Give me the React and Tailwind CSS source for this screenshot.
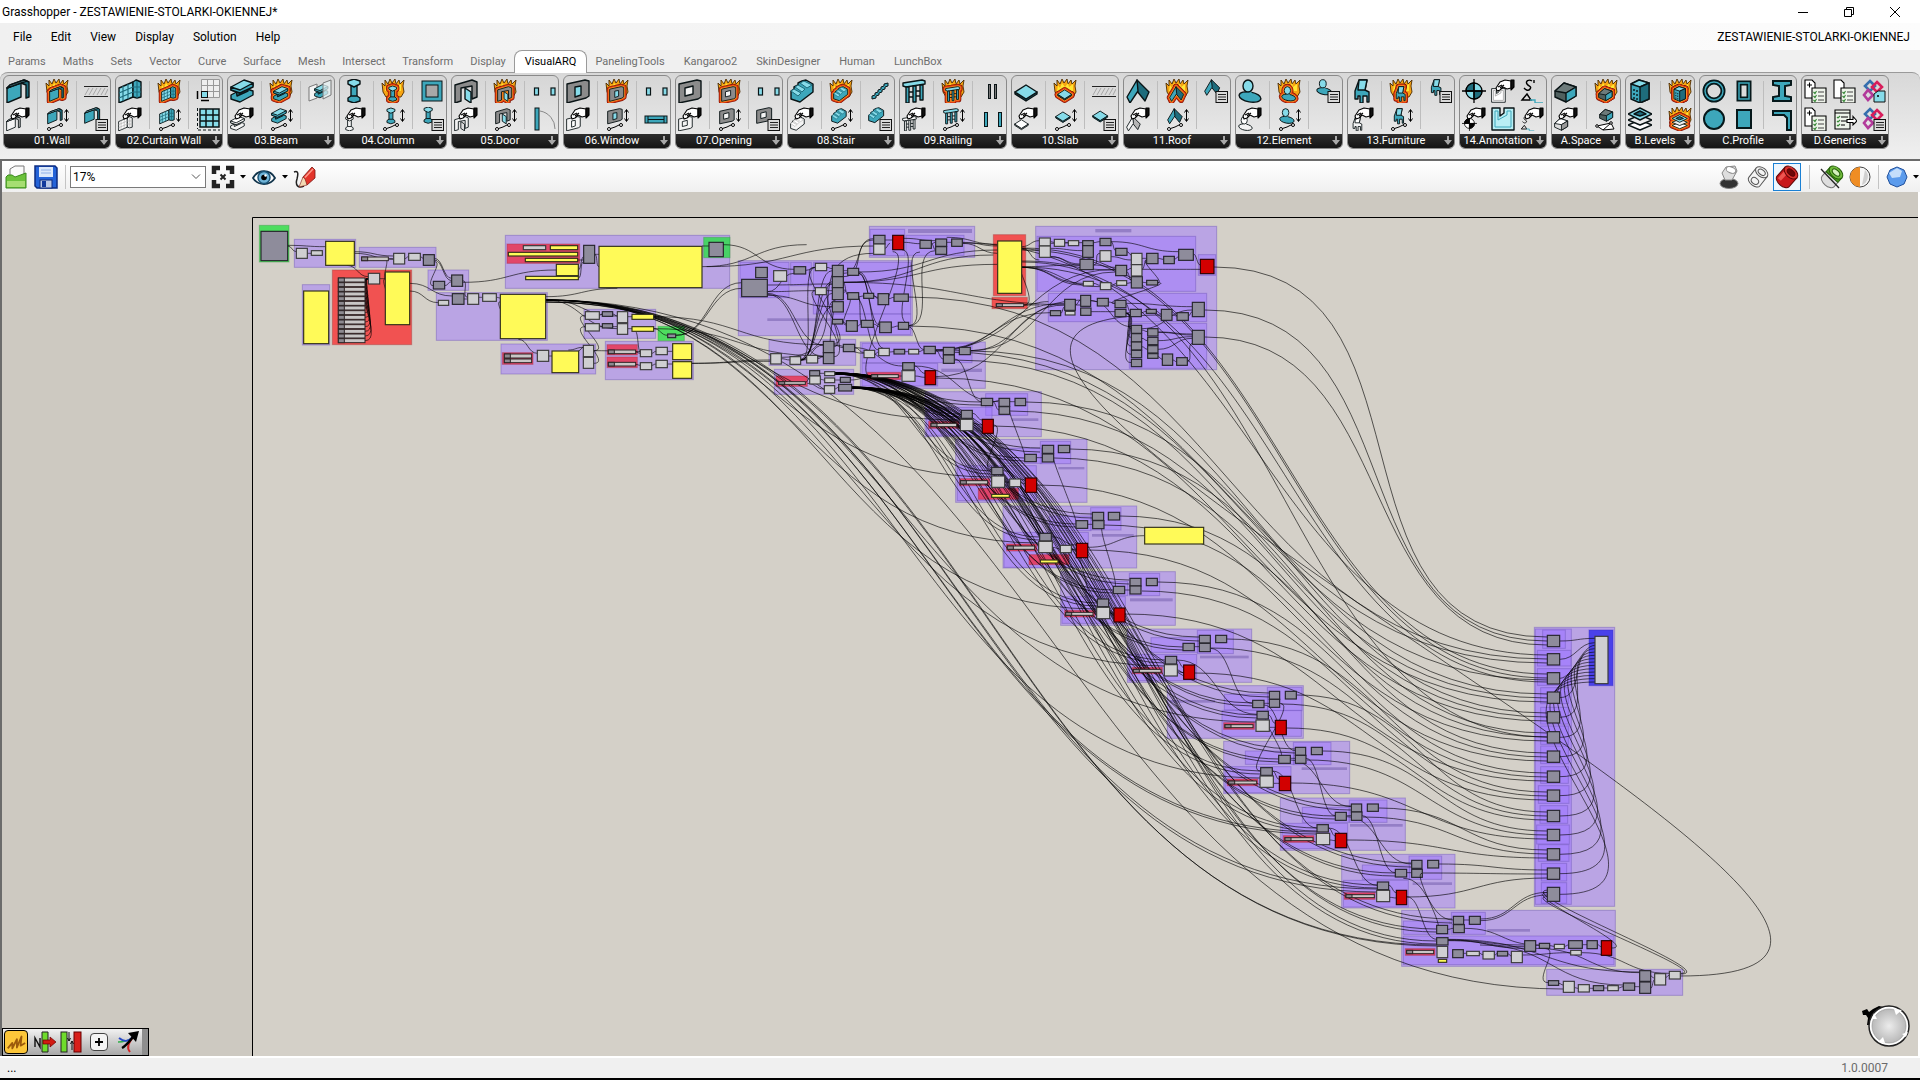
import React from "react";

const T = "#3da7bb";
const L = "#86dbe9";
const D = "#1e6c7c";
const G = "#8b8b8b";

/* ---------- ribbon glyphs ---------- */

function Shape({ kind, white, halo, haloWidth }) {
  const t = white ? "#f4f4f4" : T;
  const l = white ? "#ffffff" : L;
  const d = white ? "#b5b5b5" : D;
  const g = white ? "#f4f4f4" : G;
  const s = { stroke: halo ?? "#0a1416", strokeWidth: haloWidth ?? 1.4, strokeLinejoin: "round" };
  switch (kind) {
    case "wall":
      return (
        <g {...s}>
          <path d="M1 9 15 3V18L1 24Z" fill={t} />
          <path d="M1 9 4 6 18 1 23 3V18L20 19V6L15 4Z" fill={d} />
          <path d="M1 9 4 6 18 1 21 2 15 4Z" fill={l} />
        </g>
      );
    case "curtain":
      return (
        <g {...s}>
          <path d="M1 9 15 3V18L1 24Z" fill={l} />
          <path d="M15 3 18 1 23 3V18L19 19 15 18Z" fill={t} />
          <path d="M5 7V22M10 5V20M1 14 15 8M1 19 15 13M19 2V19M15 8 23 8M15 13 23 13" fill="none" stroke={d} strokeWidth="1.2" />
        </g>
      );
    case "beam":
      return (
        <g {...s}>
          <path d="M1 16 14 9 23 12V16L10 23 1 20Z" fill={t} />
          <path d="M6 10 18 7V12L7 17Z" fill={d} />
          <path d="M1 8 14 1 23 4V7L10 14 1 11Z" fill={l} />
          <path d="M1 8 10 11 23 4V8L10 14 1 11Z" fill={t} />
        </g>
      );
    case "column":
      return (
        <g {...s}>
          <path d="M9 5H15V19H9Z" fill={t} />
          <path d="M6 2 12 0 18 2V5L12 8 6 5Z" fill={l} />
          <path d="M6 19 9 17H15L18 19V22L12 24 6 22Z" fill={t} />
        </g>
      );
    case "door":
      return (
        <g {...s}>
          <path d="M1 6 18 1 23 3V18L18 20V7L7 9V22L1 24Z" fill={g} />
          <path d="M11 9 17 13V24L11 20Z" fill={white ? "#ddd" : L} />
        </g>
      );
    case "window":
      return (
        <g {...s}>
          <path d="M1 5 19 1 23 2V17L20 19 1 24Z" fill={g} />
          <path d="M9 8 15 7V16L9 18Z" fill={white ? "#fff" : L} />
        </g>
      );
    case "opening":
      return (
        <g {...s}>
          <path d="M1 5 19 1 23 2V18L20 20 1 24Z" fill={g} />
          <path d="M7 9 15 7V15L7 17Z" fill="#f4f4f4" />
        </g>
      );
    case "stair":
      return (
        <g {...s}>
          <path d="M1 12 4 10V8L8 6V4L12 2 16 1 23 5V13L10 23 1 20Z" fill={t} />
          <path d="M1 12 4 10 11 14 8 17ZM5 8 8 6 15 10 12 13ZM10 4 14 2 22 6 17 9Z" fill={l} stroke={d} strokeWidth="1" />
        </g>
      );
    case "railing":
      return (
        <g {...s}>
          <path d="M1 4 20 1 23 2V5L4 8 1 7Z" fill={l} />
          <path d="M4 8H7V24H4ZM11 7H14V23H11ZM18 6H21V21H18Z" fill={t} />
          <path d="M7 13H11M14 12H18M7 18H11M14 17H18" fill="none" />
        </g>
      );
    case "slab":
      return (
        <g {...s}>
          <path d="M1 13 12 20 23 13V15L12 22 1 15Z" fill={d} />
          <path d="M1 13 12 6 23 13 12 20Z" fill={l} />
        </g>
      );
    case "roof":
      return (
        <g {...s}>
          <path d="M11 1 23 13 19 22 11 12Z" fill={d} />
          <path d="M11 1 1 18 4 24 12 12Z" fill={t} />
        </g>
      );
    case "element":
      return (
        <g {...s}>
          <ellipse cx="12" cy="18" rx="11" ry="5" fill={t} transform="rotate(10 12 18)" />
          <path d="M9 12H13L15 18H8Z" fill={t} stroke="none" />
          <ellipse cx="10" cy="7" rx="5" ry="6" fill={l} />
        </g>
      );
    case "chair":
      return (
        <g {...s}>
          <path d="M9 1 17 1 15 11 19 13V23H17V17H13V24H10V17H8V20H5V12Z" fill={t} />
          <path d="M9 1 17 1 15 11H8Z" fill={l} />
        </g>
      );
    case "space":
      return (
        <g {...s}>
          <path d="M1 12 10 4 22 8V17L12 23 1 18Z" fill={white ? "#ddd" : "#50605f"} />
          <path d="M1 12 10 4 22 8 12 14Z" fill={white ? "#fff" : "#6d7b7b"} />
          <path d="M12 14 22 8V17L12 23Z" fill={white ? "#999" : T} />
        </g>
      );
    case "building":
      return (
        <g {...s}>
          <path d="M3 5 11 1 21 4V20L12 24 3 20Z" fill={t} />
          <path d="M3 5 11 1 21 4 12 8Z" fill={l} />
          <path d="M12 8 21 4V20L12 24Z" fill={d} />
          {!halo && <path d="M6 10V20M9 11V21" strokeDasharray="2 2" fill="none" />}
        </g>
      );
    case "layers":
      return (
        <g {...s}>
          <path d="M0 18 12 13 24 18 12 23Z" fill="#fff" />
          <path d="M0 13 12 8 24 13 12 18Z" fill="#eee" />
          <path d="M0 7 12 1 24 7 12 13Z" fill={l} />
          <path d="M6 7 12 4 18 7 12 9Z" fill={d} />
        </g>
      );
    case "quad":
      return (
        <g stroke="#000" strokeWidth="1.3">
          <circle cx="12" cy="12" r="8" fill={white ? "#fff" : L} />
          <path d="M12 12V4A8 8 0 0 0 4 12ZM12 12V20A8 8 0 0 0 20 12Z" fill={white ? "#000" : D} />
          <path d="M12 0V24M0 12H24" />
        </g>
      );
    case "plan":
      return (
        <g {...s}>
          <path d="M1 1H9V9L13 6V1H23V23H1Z" fill={white ? "#fff" : "#b9eef4"} />
          <path d="M4 4H7V13L16 8V4H20V20H4Z" fill="none" stroke={white ? "#888" : T} strokeWidth="1" />
        </g>
      );
    case "mark":
      return (
        <g fill="none" stroke="#000" strokeWidth="1.4">
          <path d="M12 2C9 0 5 2 7 5S12 7 10 10 5 10 4 9M14 1V4" />
          <path d="M2 21 7 15 11 21Z" fill="#ddd" />
          <path d="M10 21H15V24H23" stroke={T} />
        </g>
      );
    default:
      return null;
  }
}

function Hand() {
  return (
    <g stroke="#000" strokeWidth="1.1" strokeLinejoin="round">
      <path d="M5 9 9 3 14 1 20 2V9L16 10 12 8 9 11 6 12Z" fill="#fff" />
      <path d="M7 8 11 6M9 9 13 6" fill="none" />
      <path d="M20 1H23V8L20 11Z" fill="#111" />
    </g>
  );
}

function ListBox() {
  return (
    <g>
      <rect x="12" y="12.5" width="11.5" height="11" fill="#d9d9d9" stroke="#111" />
      <path d="M14 15.5H22M14 18H22M14 20.5H22" stroke="#222" />
    </g>
  );
}

function Burning({ kind }) {
  return (
    <>
      <path
        d="M2 13 1 4 4 7 4 1 7 5 9 0 11 4 14 0 15 5 18 1 19 5 23 1 22 7 23 13 20 18H5Z"
        fill="#f7a413"
        stroke="#4b2a00"
        strokeWidth=".9"
        strokeLinejoin="round"
      />
      <path d="M4 12 5 6 7 9 9 4 12 8 15 4 16 8 20 5 20 12Z" fill="#ffe632" />
      <g transform="translate(4 7) scale(.64)">
        <Shape kind={kind} halo="#7d1203" haloWidth={9} />
        <Shape kind={kind} halo="#e23b10" haloWidth={7} />
        <Shape kind={kind} halo="#ff9d24" haloWidth={3.5} />
        <Shape kind={kind} />
      </g>
    </>
  );
}

function Glyph({ name }) {
  const [mode, kind] = name.split(":");
  let body = null;
  if (mode === "full") body = <Shape kind={kind} />;
  if (mode === "fire") body = <Burning kind={kind} />;
  if (mode === "pick")
    body = (
      <>
        <g transform="translate(0 9) scale(.62)">
          <Shape kind={kind} white />
        </g>
        <Hand />
      </>
    );
  if (mode === "size")
    body = (
      <>
        <g transform="translate(2 1) scale(.66)">
          <Shape kind={kind} />
        </g>
        <g stroke="#000" fill="none">
          <path d="M21.5 3V14M19.5 5.5 21.5 2.500 23.5 5.500M19.5 11.5 21.5 14.5 23.5 11.5" />
          <path d="M4 22 10 20 16 17" />
          <circle cx="4" cy="22" r="1.5" fill="#fff" />
          <circle cx="16" cy="18" r="1.5" fill="#fff" />
        </g>
      </>
    );
  if (mode === "list")
    body = (
      <>
        <g transform="scale(.68)">
          <Shape kind={kind} />
        </g>
        <ListBox />
      </>
    );
  if (mode === "misc") body = MISC[kind];
  return (
    <svg viewBox="0 0 24 24" className="h-6 w-6" aria-hidden="true">
      {body}
    </svg>
  );
}

const docs = (plus) => (
  <g stroke="#000" strokeWidth="1.1">
    <path d="M1 1H8L11 4V19H1Z" fill="#fff" />
    {plus && <path d="M3 6H8M5.5 3.5V8.5" />}
    <path d="M8 9H22V24H8Z" fill="#eef3ea" />
    <path d="M14 13H20M14 17H20M14 21H20" stroke="#444" />
    <path d="M9.5 13 11 14.5 12.5 12M9.5 17 11 18.5 12.5 16M9.5 21 11 22.5 12.5 20" stroke="#3a8a3a" fill="none" />
  </g>
);
const links = (
  <g fill="none" strokeWidth="2.6">
    <path d="M8 2 13 7 8 12 3 7Z" stroke="#356fae" />
    <path d="M15 3 20 8 15 13 10 8Z" stroke="#d81e5b" />
    <path d="M6 11 11 16 6 21 2 16Z" stroke="#b23a9a" />
  </g>
);
const MISC = {
  none: null,
  hatch: (
    <g stroke="#222" strokeWidth="1.2">
      <path d="M0 7.5H24M0 17.5H24" />
      <path d="M1 16 5 9M5 16 9 9M9 16 13 9M13 16 17 9M17 16 21 9M21 16 24 10" stroke="#999" strokeWidth=".8" />
    </g>
  ),
  grid1: (
    <g stroke="#999" fill="#eee">
      <path d="M5.5 .5H23.5V18.5H5.5ZM11.5 .5V18.5M17.5 .5V18.5M5.5 6.5H23.5M5.5 12.5H23.5" />
      <rect x="5.5" y="12.5" width="6" height="6" fill={L} stroke="#111" />
      <path d="M1.5 12V20M5 21.5H13" stroke="#000" strokeWidth="1.5" />
    </g>
  ),
  grid2: (
    <g stroke="#0a1416" strokeWidth="1.5">
      <path d="M4 2H23V20H4Z" fill={L} />
      <path d="M10 2V20M17 2V20M4 8H23M4 14H23" />
      <path d="M1.5 1V22M2 23H24" strokeWidth="1" strokeDasharray="3 2" />
    </g>
  ),
  planes: (
    <g stroke="#777">
      <path d="M1 8 9 5V19L1 22Z" fill="#f5f5f5" />
      <g transform="translate(6 5) scale(.6)">
        <Shape kind="beam" />
      </g>
      <path d="M15 4 23 1V16L15 20Z" fill="#eaf6f8" fillOpacity=".7" />
    </g>
  ),
  square: (
    <g stroke="#0a1416">
      <rect x="2" y="2" width="20" height="20" fill={T} />
      <rect x="6" y="6" width="12" height="12" fill="#a8a8a8" />
    </g>
  ),
  jambs: (
    <g stroke="#0a1416" strokeWidth="1.2" fill={L}>
      <rect x="2.5" y="9" width="4" height="7" />
      <rect x="19" y="9" width="4" height="7" />
    </g>
  ),
  swing: (
    <g stroke="#0a1416">
      <rect x="3" y="1" width="4" height="22" fill={T} />
      <path d="M8 4A18 18 0 0 1 23 22" fill="none" stroke="#888" />
    </g>
  ),
  sill: (
    <g stroke="#0a1416">
      <rect x="1" y="9" width="22" height="7" fill={T} />
      <path d="M4 9V16M20 9V16M4 12.5H20" />
    </g>
  ),
  steps: <path d="M4 17 7 16V14L10 13V11L13 10V8L16 7V5L20 4V7L17 8V10L14 11V13L11 14V16L8 17V19L4 20Z" fill={T} stroke="#0a1416" />,
  bars1: (
    <g stroke="#0a1416" fill="#777">
      <rect x="8.5" y="5.5" width="2" height="14" />
      <rect x="14.5" y="5.5" width="2" height="14" />
    </g>
  ),
  bars2: (
    <g stroke="#0a1416" fill={T}>
      <rect x="4.5" y="5.5" width="3" height="14" />
      <rect x="18.5" y="5.5" width="3" height="14" />
    </g>
  ),
  spacePoly: (
    <>
      <g transform="translate(5 0) scale(.62)">
        <Shape kind="space" />
      </g>
      <path d="M3 19 17 16 20 22 9 23ZM9 23 17 16" fill="#fff" stroke="#000" />
      <circle cx="3" cy="19" r="1.3" fill="#fff" stroke="#000" />
      <circle cx="17" cy="16" r="1.3" fill="#fff" stroke="#000" />
    </>
  ),
  ring: (
    <g fill="none">
      <circle cx="12" cy="12" r="9" stroke="#06181b" strokeWidth="5" />
      <circle cx="12" cy="12" r="9" stroke={T} strokeWidth="1.5" />
    </g>
  ),
  rectRing: (
    <g fill="none">
      <rect x="7" y="4" width="10" height="16" stroke="#06181b" strokeWidth="5" />
      <rect x="7" y="4" width="10" height="16" stroke={T} strokeWidth="1.5" />
    </g>
  ),
  disc: <circle cx="12" cy="12" r="10" fill={T} stroke="#06181b" strokeWidth="2" />,
  block: <rect x="5" y="3" width="14" height="18" fill={T} stroke="#06181b" strokeWidth="2" />,
  ibeam: <path d="M3 2H21V6L15 7V17L21 18V22H3V18L9 17V7L3 6Z" fill={T} stroke="#06181b" strokeWidth="2" />,
  angle: <path d="M3 4H21V23H17V11L14 8H3Z" fill={T} stroke="#06181b" strokeWidth="2" />,
  docsPlus: docs(true),
  docs: docs(false),
  docOut: (
    <g stroke="#000" strokeWidth="1.1">
      <path d="M2 3H17V22H2Z" fill="#eef3ea" />
      <path d="M2 6H17M8 10H15M8 14H15M8 18H12" />
      <path d="M4 10 5 11 7 9M4 14 5 15 7 13M4 18 5 19 7 17" stroke="#3a8a3a" fill="none" />
      <path d="M14 12.5H20V9.5L24 14 20 18V15.5H14Z" fill="#fff" />
    </g>
  ),
  linkTag: (
    <>
      {links}
      <path d="M12 15 16 12H23V23H12Z" fill={L} stroke="#111" />
      <circle cx="16" cy="17" r="1" />
    </>
  ),
  linkList: (
    <>
      {links}
      <ListBox />
    </>
  ),
};

const trio = (k, c3, c4) => [
  ["full:" + k, "pick:" + k],
  ["fire:" + k, "size:" + k],
  [c3, c4],
];
const PANELS = [
  { label: "01.Wall", cols: trio("wall", "misc:hatch", "list:wall") },
  { label: "02.Curtain Wall", cols: trio("curtain", "misc:grid1", "misc:grid2") },
  { label: "03.Beam", cols: trio("beam", "misc:planes", "misc:none") },
  { label: "04.Column", cols: trio("column", "misc:square", "list:column") },
  { label: "05.Door", cols: trio("door", "misc:jambs", "misc:swing") },
  { label: "06.Window", cols: trio("window", "misc:jambs", "misc:sill") },
  { label: "07.Opening", cols: trio("opening", "misc:jambs", "list:opening") },
  { label: "08.Stair", cols: trio("stair", "misc:steps", "list:stair") },
  { label: "09.Railing", cols: trio("railing", "misc:bars1", "misc:bars2") },
  { label: "10.Slab", cols: trio("slab", "misc:hatch", "list:slab") },
  { label: "11.Roof", cols: trio("roof", "list:roof", "misc:none") },
  { label: "12.Element", cols: trio("element", "list:element", "misc:none") },
  { label: "13.Furniture", cols: trio("chair", "list:chair", "misc:none") },
  {
    label: "14.Annotation",
    width: "w-[88px]",
    plain: true,
    cols: [["full:quad", "pick:quad"], ["pick:plan", "full:plan"], ["full:mark", "pick:mark"]],
  },
  { label: "A.Space", width: "w-[70px]", cols: [["full:space", "pick:space"], ["fire:space", "misc:spacePoly"]] },
  { label: "B.Levels", width: "w-[70px]", cols: [["full:building", "full:layers"], ["fire:building", "fire:layers"]] },
  {
    label: "C.Profile",
    width: "w-[98px]",
    cols: [["misc:ring", "misc:disc"], ["misc:rectRing", "misc:block"], ["misc:ibeam", "misc:angle"]],
    joined: true,
  },
  {
    label: "D.Generics",
    width: "w-[88px]",
    plain: true,
    cols: [["misc:docsPlus", "misc:docsPlus"], ["misc:docs", "misc:docOut"], ["misc:linkTag", "misc:linkList"]],
  },
];

function Panel({ label, cols, width = "w-[108px]", plain, joined }) {
  return (
    <section
      className={`${width} flex h-[74px] shrink-0 flex-col overflow-hidden rounded-md border border-[#8a8a8a] bg-linear-to-b from-[#d6d6d6] to-[#ececec]`}
    >
      <div className="flex flex-1 items-center justify-between px-0.5">
        {cols.map((col, i) => (
          <React.Fragment key={i}>
            {i > 0 && !plain && !(joined && i === 1) && <span className="h-12 w-px bg-[#bdbdbd]" />}
            <div className="flex flex-col gap-1">
              {col.map((n, j) =>
                n === "misc:none" ? (
                  <span key={j} className="h-6 w-6" />
                ) : (
                  <button key={j} aria-label={`${label} ${n}`} className="block h-6 w-6">
                    <Glyph name={n} />
                  </button>
                )
              )}
            </div>
          </React.Fragment>
        ))}
      </div>
      <button className="flex h-[14px] items-center bg-linear-to-b from-[#2e2e2e] to-[#141414] text-[11px] leading-[14px] text-white">
        <span className="flex-1 text-center">{label}</span>
        <svg viewBox="0 0 8 10" className="mr-0.5 h-2.5 w-2" aria-hidden="true">
          <path d="M3 0H5V4H8L4 9 0 4H3Z" fill="#a8a8a8" />
        </svg>
      </button>
    </section>
  );
}

/* ---------- canvas document ---------- */
/* Each sheet holds boxes [x, y, w, h] in document units, three to a screen pixel, around its own origin. */

const SLIDERS = Array.from({ length: 14 }, (_, i) => [295, 204 + i * 14, 80, 12]);

const SHEETS = [
  {
    at: [240, 210],
    purple: [[163,88,184,84],[358,112,230,60],[187,224,82,181],[564,180,122,61],[589,248,333,143],[796,76,673,159],[783,402,284,90],[1096,394,264,115],[1032,298,215,87]],
    green: [[58,46,89,110],[1391,82,79,61],[1254,349,79,43]],
    red: [[277,180,238,224]],
    crimson: [[801,102,218,58],[787,428,92,35],[1101,404,91,31],[1101,441,91,32]],
    dark: [[63,64,80,88],[550,134,33,32],[580,214,34,23],[635,195,33,34],[637,251,35,32],[1031,106,33,54],[1407,97,43,43],[1087,305,31,14],[1087,341,31,13],[1283,372,24,11]],
    light: [[169,115,33,30],[214,122,33,14],[385,190,34,32],[461,130,33,32],[506,130,35,21],[683,251,33,32],[728,251,41,23],[595,271,31,15],[1036,305,42,23],[1036,341,42,22],[1132,305,31,33],[1132,341,31,32],[892,421,34,33],[1030,406,31,34],[1030,442,31,33],[1201,419,34,21],[1248,412,34,22],[1201,458,34,21],[1248,451,34,22],[850,107,67,12]],
    yellow: [[257,94,86,72],[436,186,73,158],[191,243,75,158],[781,253,136,133],[1077,109,309,124],[931,107,82,12],[805,127,208,11],[856,145,157,10],[949,163,66,34],[857,199,158,10],[936,423,80,65],[1298,401,57,48],[1298,455,57,50],[1176,313,65,15],[1176,350,65,14]],
    slider: [...SLIDERS,[365,141,80,11],[793,432,82,12],[793,447,82,11],[1105,420,82,11],[1105,457,82,11]],
    wires: [
      [143,106,257,110],[143,108,169,125],[202,130,214,130],[343,125,461,138],[343,130,461,148],[445,146,461,146],[494,146,506,140],[541,140,550,145],
      [583,145,635,205],[583,150,635,212],[668,212,683,262,20],[614,227,635,215],[583,155,580,227,30],[668,217,949,180],[672,267,683,267],[716,262,728,262],
      [509,220,637,258],[509,243,595,278],[320,166,385,200],[419,206,436,206],[438,150,436,206,10],[436,265,436,206,18],[769,262,781,264],[781,320,781,275,18],[917,260,1132,235],
      [917,268,1132,318],[917,270,1132,356],[1064,133,1077,133],[1064,133,1077,170,10],[1015,180,1031,140],[1013,150,1031,150],[1015,204,1031,155,12],
      [1386,108,1407,108],[1386,170,1700,104],[835,388,892,430],[926,438,936,438],[1016,422,1030,412],[985,420,1030,412],[1061,422,1201,425],[1061,460,1036,350,60],[1061,422,1036,316,60],
      [1078,316,1087,312],[1118,312,1132,318],[1078,350,1132,350],[1163,320,1176,320],[1163,356,1176,356],[1187,365,1201,428],[1187,426,1201,430],[1187,463,1201,466],[1235,430,1248,424],[1235,466,1248,462],[1282,424,1298,424],[1282,462,1298,462],[1355,460,1592,450],[1355,460,1592,454],[1307,376,1505,218],[1307,376,1505,235],
      [1241,356,1283,376],[1241,320,1750,404],[1241,356,1750,438],
      ...SLIDERS.map(([x, y]) => [375, y + 6, 385, 206, 8 + (y - 204) / 3.4]),
    ],
  },
  {
    at: [720, 210],
    purple: [[448,49,316,93],[450,58,104,79],[558,76,174,60],[55,152,522,225],[60,157,147,106],[212,157,62,70],[280,157,292,155],[332,312,240,62],[147,388,260,78],[421,396,375,139],[426,400,330,58],[426,460,227,68],[163,478,238,75],[947,49,543,430],[951,79,476,165],[985,250,475,85],[1228,340,232,135],[1435,134,52,62]],
    red: [[820,74,97,183],[816,262,106,34]],
    crimson: [[168,498,94,31],[442,487,100,22]],
    title: [[564,57,192,12],[1126,57,108,10],[142,325,190,8],[664,476,122,10]],
    dark: [[107,172,35,31],[65,208,77,52],[222,170,35,22],[337,166,33,34],[337,200,33,33],[337,233,33,36],[337,275,33,31],[383,175,33,21],[383,248,33,20],[431,250,30,15],[474,251,32,33],[522,252,43,22],[337,328,31,14],[379,332,33,32],[424,331,36,21],[479,336,35,32],[535,337,31,21],[310,394,32,34],[310,428,32,33],[370,403,34,22],[461,76,34,26],[600,91,34,24],[647,87,33,22],[647,110,33,23],[695,87,32,22],[522,418,32,14],[612,409,34,22],[670,412,33,22],[670,435,33,25],[718,412,33,22],[548,458,35,22],[269,482,30,16],[361,502,30,15],[356,523,39,20],[1088,92,32,15],[1088,107,32,35],[1080,148,40,31],[1140,85,33,22],[1187,115,34,21],[1187,166,33,31],[1280,130,34,31],[1331,139,32,22],[1376,118,44,33],[1234,200,33,34],[1280,211,33,14],[1034,268,32,33],[1082,256,30,33],[1082,294,31,22],[1132,265,33,23],[1185,271,33,22],[1185,298,33,22],[1231,298,33,22],[1279,298,30,12],[1324,298,32,33],[1371,308,34,23],[1417,277,36,43],[1417,361,36,42],[991,302,31,15],[1234,346,31,24],[1234,371,31,25],[1234,396,31,24],[1234,421,31,22],[1234,448,31,22],[1283,356,31,22],[1283,382,31,22],[1283,407,31,22],[1283,431,31,14],[1327,432,31,34],[1370,443,32,23]],
    light: [[161,182,39,32],[286,160,34,22],[286,233,33,21],[152,431,32,31],[210,440,32,23],[260,436,33,23],[461,102,34,31],[432,421,32,22],[476,415,32,22],[566,418,30,14],[546,482,39,32],[269,498,32,24],[314,485,30,12],[314,504,30,14],[313,527,31,23],[958,84,33,24],[958,108,33,34],[1003,88,31,21],[1045,92,31,15],[1140,122,33,32],[1234,130,32,34],[1234,164,32,34],[1090,214,30,14],[1141,218,32,21],[1190,212,30,14],[1036,304,29,11]],
    yellow: [[833,93,72,157]],
    fault: [[518,76,33,43],[1441,148,41,43],[615,482,32,42]],
    slider: [[829,281,82,9],[176,515,80,8],[455,494,80,9]],
    wires: [
      [10,104,222,178],[-40,170,461,108],[142,225,337,222],[142,245,286,242],[142,245,222,190],[142,250,310,405],[142,253,310,440],[142,256,337,290],
      [257,181,286,172],[320,172,337,176],[320,242,337,242],[370,182,383,182],[370,217,383,255],[416,186,474,262],[370,217,820,135],[370,217,833,163],[370,217,1080,285],[370,190,461,86,60],[370,200,461,90,70],[370,240,337,285,30],[416,186,833,120],
      [242,450,310,405],[242,450,310,440],[242,450,337,182,60],[242,452,337,215,50],[242,450,337,250,45],[242,450,337,290,40],[242,448,286,172,50],[293,446,310,440],[184,446,210,450],[184,442,461,130,260],
      [342,405,370,413],[404,413,432,428],[342,440,337,182,-40],[342,440,337,222,60],[342,400,286,172,80],[342,410,286,242,50],[416,260,431,258],[461,258,474,265],[506,266,522,262],[412,348,424,342],[460,342,479,350],[514,352,535,348],[368,335,379,342],[416,190,479,345],[416,260,424,342],
      [416,190,490,415],[404,260,476,420],[383,260,379,345,30],[566,347,600,126,70],[566,347,647,122,90],[565,350,612,419],[495,90,518,90],[551,97,600,101],[545,119,566,340,60],[495,115,510,100],[518,125,455,500,80],[634,101,647,97],[634,101,647,120],[680,97,695,97],[680,82,833,103],[727,97,833,108],[727,100,833,130],[551,85,647,92],
      [905,110,958,92],[905,115,958,120],[905,115,958,150,30],[905,153,1187,180],[905,170,1080,165],[905,172,1090,220],[905,172,1090,225],[905,172,1141,230],[911,285,905,115,60],[911,285,958,285],[911,285,985,275],
      [646,420,1034,280],[646,500,1082,270],[751,422,1187,186],[646,420,1187,178],[751,422,1034,285],[646,424,991,308],
      [464,432,476,426],[508,426,522,425],[554,425,566,425],[596,425,612,420],[646,420,670,422],[703,422,718,422],[646,420,670,447],[585,498,615,502],[583,468,615,490],[535,498,546,498],[342,405,432,430],[404,413,548,468],[703,447,785,575],[583,468,835,575],
      [256,518,269,505],[299,490,314,490],[301,508,314,510],[344,510,361,510],[344,490,455,497],[344,537,356,532],[391,510,455,500],[262,520,313,537],
      [991,95,1003,97],[1034,97,1045,98],[991,100,1088,98],[991,115,1088,122],[991,140,1080,162],[991,140,1080,166],[1120,98,1140,95],[1120,165,1140,130,20],[1173,95,1187,122],[1173,95,1376,125],[1221,125,1234,135],[1173,140,1234,150],[1120,165,1187,172],[1220,180,1234,175],[1220,185,1234,210],[1266,145,1280,145],[1314,145,1331,148],[1363,148,1376,140],[1266,178,1441,178],[1266,178,1280,150],[1120,220,1141,226],[1173,228,1190,220],[1220,220,1234,218],[1267,217,1280,218],[1313,218,1280,150,25],[1313,218,1185,280,60],[1420,132,1441,165],
      [1022,310,1034,290],[1066,285,1082,270],[1112,272,1132,275],[1165,276,1185,280],[1218,282,1231,305],[1113,305,1185,305],[1218,308,1231,308],[1264,308,1279,304],[1309,304,1324,312],[1356,315,1371,318],[1405,318,1417,305],[1218,280,1417,290],[1112,272,1234,350],
      [1218,310,1234,356,22],[1218,310,1234,382,30],[1218,310,1234,408,36],[1218,310,1234,433,44],[1218,310,1234,458,52],[1265,360,1283,365],[1265,385,1283,392],[1265,410,1283,418],[1314,367,1417,375],[1314,392,1417,380],[1314,418,1417,385],[1265,356,1417,300],[1314,440,1327,448],[1358,450,1370,455],[1402,455,1417,400,18],[1314,366,1417,372],
    ],
  },
  {
    at: [900, 370],
    purple: [[75,65,349,135],[257,71,126,65],[80,112,196,84],[167,208,394,189],[421,214,91,67],[300,235,125,45],[172,287,237,105],[309,408,401,186],[572,413,91,67],[448,438,125,44],[312,487,253,105],[482,605,344,161],[688,610,91,67],[558,634,125,43],[486,680,190,80]],
    crimson: [[86,154,90,21],[179,326,90,21],[235,355,120,33],[320,522,90,21],[387,554,120,30],[494,721,90,20]],
    title: [[335,145,80,8],[475,291,78,7],[576,492,125,8],[690,685,128,9]],
    dark: [[244,85,34,22],[297,85,32,24],[297,110,32,23],[345,85,32,22],[184,121,33,24],[374,253,35,22],[427,226,34,24],[427,252,34,24],[475,226,34,22],[275,292,34,22],[528,452,35,23],[577,427,34,24],[578,452,34,24],[625,427,34,23],[419,490,35,23],[640,649,34,22],[690,625,33,23],[690,648,33,24],[739,625,33,22],[592,687,34,23]],
    light: [[181,148,38,34],[275,318,39,34],[329,327,33,23],[416,514,41,34],[481,526,33,22],[590,712,39,34]],
    yellow: [[275,373,53,9],[421,570,53,9],[734,472,177,50]],
    fault: [[247,148,33,42],[376,324,34,43],[529,520,34,43],[642,714,33,42]],
    slider: [[93,160,77,10],[181,332,82,10],[322,528,82,10],[497,727,82,9]],
    wires: [
      [219,160,247,165],[314,335,329,338],[362,338,376,342],[457,532,481,537],[514,537,529,540],[629,728,642,730],[278,95,297,92],[278,95,297,120],[329,95,345,95],[409,263,427,263],[563,463,578,463],[674,660,690,660],[563,532,734,497],[217,130,247,150],[309,302,376,330],[454,500,529,525],[626,697,642,720],
      [329,120,374,260,-8],[280,165,275,300,45],[461,262,528,460,-10],[362,338,419,498,-10],[611,462,640,656,-30],[514,537,592,695],
    ],
  },
  {
    at: [1110, 620],
    purple: [[52,27,373,160],[262,31,108,70],[123,53,140,44],[57,103,203,79],[172,197,408,158],[472,202,104,70],[343,223,130,47],[336,271,238,78],[341,364,378,157],[550,367,113,67],[406,393,145,40],[345,440,198,78],[511,534,375,157],[718,540,113,67],[577,562,140,45],[516,610,197,76],[695,703,340,161],[897,708,98,70],[757,735,142,43],[700,781,195,80]],
    crimson: [[67,142,90,19],[341,308,92,20],[352,477,91,20],[520,647,92,20],[703,818,92,20]],
    title: [[270,107,146,8],[180,240,135,8],[575,442,136,8],[720,612,158,8],[908,787,118,8]],
    dark: [[219,70,34,22],[268,46,33,23],[268,70,33,25],[317,46,33,22],[166,109,34,23],[428,241,34,22],[478,214,31,24],[478,238,31,24],[526,214,33,23],[441,274,34,23],[506,406,35,24],[556,382,31,24],[556,406,32,24],[604,382,33,22],[452,443,35,23],[676,577,33,24],[724,552,31,24],[724,576,32,25],[772,552,33,22],[621,614,34,22],[856,748,34,23],[905,721,31,24],[905,748,32,24],[953,721,33,23],[802,786,34,23]],
    light: [[163,134,39,34],[438,300,40,34],[450,468,40,34],[619,640,40,34],[800,811,39,34]],
    fault: [[221,135,33,43],[496,301,33,43],[508,469,34,43],[676,640,34,43],[859,811,31,43]],
    slider: [[70,148,83,9],[345,314,84,9],[356,483,84,9],[525,653,84,9],[708,824,85,9]],
    wires: [
      [253,80,268,80],[462,250,478,250],[541,415,556,415],[709,587,724,587],[890,758,905,758],[202,155,221,158],[478,322,496,322],[490,490,508,490],[659,660,676,662],[839,832,859,834],[200,120,221,142],[475,285,496,310],[487,453,508,478],[655,624,676,648],[836,796,859,818],
      [509,250,452,453,60],[475,283,506,415,-40],[200,120,441,283],[301,85,428,250],[587,415,676,587],[487,453,621,624],[756,587,856,758],[655,624,802,796],[541,420,724,560],[709,590,905,732],[462,255,556,392],
    ],
  },
  {
    at: [1380, 620],
    purple: [[463,22,241,837],[466,27,108,826],[488,30,68,55],[472,91,101,47],[472,146,101,50],[482,203,83,48],[482,262,83,50],[482,318,83,55],[482,378,83,53],[482,440,83,50],[475,497,92,53],[480,557,83,53],[470,615,98,57],[475,674,92,50],[484,730,76,53],[484,788,76,62],[65,871,641,168],[214,877,102,66],[70,903,140,40],[70,948,632,86],[500,1048,408,78]],
    crimson: [[76,986,89,20]],
    blue: [[627,30,72,167]],
    title: [[322,927,128,8]],
    dark: [...[63,118,175,233,292,352,410,470,527,588,645,703,761].map((y) => [502, y - 17, 37, 34]),[502,802,37,42],[170,916,33,25],[220,889,31,24],[220,914,33,24],[268,889,33,24],[170,953,34,22],[218,989,32,24],[352,994,31,14],[434,962,33,32],[478,970,31,15],[566,962,41,23],[621,962,31,24],[505,1082,31,14],[640,1097,31,15],[730,1089,34,22],[779,1052,33,32],[779,1086,33,34]],
    light: [[645,49,39,142],[171,979,32,34],[260,994,38,13],[309,994,34,23],[394,994,33,34],[523,973,30,13],[572,991,32,14],[550,1084,33,33],[595,1094,33,22],[683,1097,32,15],[824,1061,33,34],[868,1054,33,23]],
    yellow: [[175,1018,25,9]],
    fault: [[664,962,31,44]],
    slider: [[80,991,81,10]],
    wires: [
      [539,63,645,55],[539,118,645,68,50],
      ...[175,233,292,352,410,470,527,588,645,703,761,823].map((y, i) => [539, y, 645, 76 + i * 10, 40 + (y - 175) * 0.65]),
      [301,897,502,817],[301,902,502,825],[203,928,220,925],[251,900,268,900],[204,960,434,975],[204,962,434,980],[204,960,434,985],[203,958,779,1056],[253,925,478,975],[250,1000,260,1000],[298,1000,309,1004],[343,1005,352,1001],[383,1001,394,1008],[467,976,478,976],[509,977,523,979],[553,979,566,975],[607,974,621,974],[652,974,664,980],[427,1005,572,998],[467,985,779,1058],[604,998,868,1060],[695,984,502,818,90],[901,1060,502,830,110],[901,1062,509,810,140],
      [494,985,505,1088,50],[536,1090,550,1095],[583,1103,595,1105],[628,1105,640,1105],[671,1104,683,1104],[715,1104,730,1100],[764,1100,779,1100],[812,1068,824,1075],[812,1105,824,1078],[857,1072,868,1066],[300,975,730,1095],
      [70,775,220,900],[126,760,170,928,-30],[80,830,170,958],
    ],
  },
];

/* Per floor module: junction, two stack inputs, output node and result node on screen. */
const MODULES = [
  [892,352, 902,366, 902,376, 970,351, 936,378],
  [981,402, 961,414, 960,424, 1026,402, 993,426],
  [1024,458, 991,471, 991,481, 1070,449, 1037,485],
  [1076,524, 1039,537, 1038,547, 1120,516, 1088,550],
  [1113,590, 1097,603, 1096,613, 1158,582, 1125,614],
  [1183,647, 1165,660, 1164,670, 1227,639, 1195,673],
  [1253,703, 1257,715, 1256,726, 1297,695, 1287,728],
  [1279,759, 1260,771, 1260,782, 1323,751, 1291,783],
  [1335,816, 1317,828, 1316,838, 1379,808, 1347,840],
  [1395,873, 1377,885, 1376,896, 1439,864, 1407,897],
  [1436,929, 1436,941, 1437,950, 0,0, 0,0],
];
const ROW_Y = [641, 659, 678, 698, 717, 737, 757, 777, 796, 816, 835, 854, 874];

function trunkWires() {
  const w = [[1214, 267, 1547, 637, 235], [1205, 310, 1547, 641, 215], [1205, 337, 1547, 645, 200]];
  const early = [[963, 243], [908, 297], [908, 326], [1022, 248], [1022, 250], [1022, 267]];
  early.forEach(([x, y], i) => w.push([x, y, 1547, ROW_Y[1 + Math.floor(i / 3)] + ((i % 3) - 1) * 4]));
  w.push([1022, 262, 1547, 737], [946, 426 - 74, 1547, 680]);
  MODULES.forEach(([jx, jy, ax, ay, bx, by, ox, oy, fx, fy], k) => {
    if (ox) {
      const y = ROW_Y[Math.min(k + 3, 12)];
      w.push([ox, oy, 1547, y - 4], [ox - 16, oy + 9, 1547, y], [fx, fy, 1547, y + 4]);
    }
    if (k > 0) {
      w.push([835, 373, jx, jy], [852, 388, jx, jy + 3], [852, 388, ax, ay], [835, 374, ax, ay + 3]);
      w.push([546, 300, bx, by - 4]);
      if (k > 1) w.push([852, 387, jx + 16, jy - 6], [835, 373, jx + 16, jy - 10]);
      if (k > 7) w.push([546, 302, ax, ay + 4]);
    }
  });
  w.push([546, 300, 1563, 989]);
  w.push([1680, 976, 1161, 315, 455]);
  return w;
}
const TRUNK = trunkWires();

function wirePath([x1, y1, x2, y2, pull]) {
  const d = pull ?? Math.max(Math.abs(x2 - x1) / 2, 6);
  return `M${x1} ${y1}C${x1 + d} ${y1} ${x2 - d} ${y2} ${x2} ${y2}`;
}

const FRAMES = [
  ["purple", "#9f78ff", 0.5, "#6f55b8"],
  ["green", "#22e23c", 0.75, "#3f9a4a"],
  ["red", "#f63c3c", 0.85, "#a34040"],
  ["crimson", "#e93653", 0.85, "#a03048"],
  ["blue", "#3a33ea", 0.88, "#3a33c0"],
  ["title", "#6e58a8", 0.5, "none"],
];
const NODES = [
  ["dark", "#8e8c9b", "#26252c"],
  ["light", "#cfcfd1", "#3a3a3a"],
  ["yellow", "#fffa58", "#33321a"],
  ["fault", "#d20000", "#2c0000"],
];

function Boxes({ list, ...style }) {
  return (list ?? []).map(([x, y, w, h], i) => <rect key={i} x={x} y={y} width={w} height={h} {...style} />);
}

function sheetTransform(s) {
  return `translate(${s.at[0]} ${s.at[1]}) scale(${1 / 3})`;
}

function Definition() {
  return (
    <svg viewBox="2 192 1916 864" preserveAspectRatio="xMinYMin slice" className="absolute inset-0 h-full w-full" aria-label="Node graph">
      <path d="M252.5 1100V217.5H1930V1100Z" fill="#d4d0c8" stroke="#000" />
      {SHEETS.map((s, i) => (
        <g key={i} transform={sheetTransform(s)} strokeWidth="3">
          {FRAMES.map(([k, fill, op, line]) => (
            <Boxes key={k} list={s[k]} fill={fill} fillOpacity={op} stroke={line} strokeOpacity=".45" />
          ))}
        </g>
      ))}
      <g fill="none" stroke="#000" strokeOpacity=".62" strokeWidth="1">
        {TRUNK.map((w, i) => (
          <path key={i} d={wirePath(w)} />
        ))}
      </g>
      {SHEETS.map((s, i) => (
        <g key={i} transform={sheetTransform(s)} strokeWidth="3">
          <g fill="none" stroke="#000" strokeOpacity=".6">
            {s.wires.map((w, j) => (
              <path key={j} d={wirePath(w)} />
            ))}
          </g>
          {NODES.map(([k, fill, line]) => (
            <Boxes key={k} list={s[k]} fill={fill} stroke={line} strokeWidth="3.5" />
          ))}
          <Boxes list={s.slider} fill="#c9c6c6" stroke="#2d2426" />
          <Boxes list={(s.slider ?? []).map(([x, y, , h]) => [x, y, 18, h])} fill="#8c8990" stroke="#2d2426" />
        </g>
      ))}
    </svg>
  );
}

function Compass() {
  return (
    <svg viewBox="0 0 50 46" className="absolute right-[7px] bottom-[7px] h-[46px] w-[50px]" aria-hidden="true">
      <defs>
        <radialGradient id="dial">
          <stop offset="0" stopColor="#ececec" />
          <stop offset="1" stopColor="#b9b9b9" />
        </radialGradient>
      </defs>
      <path d="M1 8 6 6 8 9 12 6 18 3 22 4 10 22 6 22 7 15 5 12 2 12Z" fill="#000" />
      <circle cx="28" cy="23" r="20" fill="#fff" stroke="#222" strokeWidth="1.5" />
      <circle cx="28" cy="23" r="17" fill="url(#dial)" stroke="#999" strokeWidth=".7" />
      <path d="M33 6 41 7 35 12ZM11 16 13 10 16 16ZM47 29 41 31 45 34ZM17 39 22 34 24 40Z" fill="#fff" />
    </svg>
  );
}

/* ---------- toolbar icons ---------- */

function Icon({ children, className = "h-6 w-6" }) {
  return (
    <svg viewBox="0 0 24 24" className={className} aria-hidden="true">
      {children}
    </svg>
  );
}
const Caret = () => (
  <svg viewBox="0 0 6 4" className="h-1 w-1.5" aria-hidden="true">
    <path d="M0 0H6L3 3.5Z" />
  </svg>
);
function Tool({ label, children, className = "" }) {
  return (
    <button aria-label={label} className={`flex h-7 shrink-0 items-center justify-center ${className}`}>
      {children}
    </button>
  );
}

const MENU = ["File", "Edit", "View", "Display", "Solution", "Help"];
const TABS_BEFORE = ["Params", "Maths", "Sets", "Vector", "Curve", "Surface", "Mesh", "Intersect", "Transform", "Display"];
const TABS_AFTER = ["PanelingTools", "Kangaroo2", "SkinDesigner", "Human", "LunchBox"];

export default function App() {
  return (
    <div className="flex h-screen flex-col overflow-hidden bg-[#f0f0f0] font-['Roboto',sans-serif] text-xs text-black">
      <header className="flex h-[23px] shrink-0 items-center justify-between bg-white pl-0.5">
        <h1>Grasshopper - ZESTAWIENIE-STOLARKI-OKIENNEJ*</h1>
        <div className="flex pr-0.5">
          <button aria-label="Minimize" className="flex h-5 w-[46px] items-center justify-center">
            <svg viewBox="0 0 10 10" className="h-2.5 w-2.5"><path d="M0 5.5H10" stroke="#000" /></svg>
          </button>
          <button aria-label="Restore" className="flex h-5 w-[46px] items-center justify-center">
            <svg viewBox="0 0 10 10" className="h-2.5 w-2.5"><path d="M.5 2.5H7.5V9.5H.5ZM2.5 2.5V.5H9.5V7.5H7.5" fill="none" stroke="#000" /></svg>
          </button>
          <button aria-label="Close" className="flex h-5 w-[46px] items-center justify-center">
            <svg viewBox="0 0 10 10" className="h-2.5 w-2.5"><path d="M0 0 10 10M10 0 0 10" stroke="#000" /></svg>
          </button>
        </div>
      </header>

      <nav className="flex h-[27px] shrink-0 items-center justify-between bg-linear-to-r from-[#f0f0f0] to-[#fcfcfc] pr-2.5 pl-[13px]">
        <div className="flex gap-[19px]">
          {MENU.map((m) => (
            <button key={m}>{m}</button>
          ))}
        </div>
        <span>ZESTAWIENIE-STOLARKI-OKIENNEJ</span>
      </nav>

      <div role="tablist" className="flex h-[22px] shrink-0 items-stretch pl-2 text-[11px] text-[#6e6e6e]">
        <div className="flex gap-[17px] pt-0.5">
          {TABS_BEFORE.map((t) => (
            <button key={t} role="tab" aria-selected="false">
              {t}
            </button>
          ))}
        </div>
        <button role="tab" aria-selected="true" className="z-10 -mb-px mx-2 rounded-t-lg border border-b-0 border-[#9a9a9a] bg-white px-2.5 text-black">
          VisualARQ
        </button>
        <div className="flex gap-[19px] pt-0.5">
          {TABS_AFTER.map((t) => (
            <button key={t} role="tab" aria-selected="false">
              {t}
            </button>
          ))}
        </div>
      </div>

      <div className="flex h-[87px] shrink-0 items-start gap-1 rounded-t-lg border-t border-[#9a9a9a] bg-linear-to-b from-[#d8d8d8] to-[#f0f0f0] pt-0.5 pl-[3px]">
        {PANELS.map((p) => (
          <Panel key={p.label} {...p} />
        ))}
      </div>

      <div className="flex min-h-0 flex-1 flex-col border-t-2 border-l-2 border-[#6b6b6b]">
        <div className="flex h-[31px] shrink-0 items-center bg-linear-to-b from-white to-[#f0f0f0]">
          <Tool label="Open file" className="w-7">
            <Icon>
              <path d="M6 4 11 1H20V18H6Z" fill="#fafafa" stroke="#777" />
              <path d="M2 12 4 10H8L11 12 22 8V23H2Z" fill="#6cc23c" stroke="#3b8a1c" />
              <path d="M3 16H21V22H3Z" fill="#a6de72" />
            </Icon>
          </Tool>
          <Tool label="Save file" className="w-8">
            <Icon>
              <path d="M1 1H21L23 3V23H3L1 21Z" fill="#2463d8" stroke="#0c2d80" strokeWidth="1.5" />
              <rect x="5" y="2" width="14" height="10" fill="#dce9fb" />
              <path d="M7 5H17M7 8H17" stroke="#8fb0e8" />
              <rect x="6" y="15" width="12" height="8" fill="#b9c8e6" stroke="#0c2d80" />
              <rect x="8" y="16" width="4" height="6" fill="#123a9c" />
            </Icon>
          </Tool>
          <span className="ml-[3px] h-6 w-px bg-[#c4c4c4]" />
          <div className="relative ml-1 h-[22px] w-[136px] border border-[#7a7a7a] bg-white">
            <select aria-label="Zoom" defaultValue="17%" className="h-full w-full appearance-none bg-transparent pl-0.5 text-xs outline-none">
              <option>17%</option>
              <option>100%</option>
            </select>
            <svg viewBox="0 0 10 6" className="pointer-events-none absolute top-[7px] right-1 h-1.5 w-2.5" aria-hidden="true">
              <path d="M1 .5 5 4.5 9 .5" fill="none" stroke="#555" />
            </svg>
          </div>
          <Tool label="Zoom extents" className="ml-[5px] gap-[5px]">
            <Icon>
              <path d="M3 9V3H9M15 3H21V9M21 15V21H15M9 21H3V15" fill="none" stroke="#222" strokeWidth="4.5" />
              <path d="M9.5 9.5 14.5 14.5M14.5 9.5 9.5 14.5" stroke="#222" strokeWidth="2" />
            </Icon>
            <Caret />
          </Tool>
          <Tool label="Named views" className="ml-1.5 gap-1.5">
            <Icon>
              <path d="M1 13C6 4 18 4 23 13 18 21 6 21 1 13Z" fill="#fff" stroke="#10334a" strokeWidth="1.8" />
              <circle cx="12" cy="12.5" r="6" fill="#6fb4d8" stroke="#1b5578" strokeWidth="1.5" />
              <circle cx="12" cy="12.5" r="2.8" fill="#000" />
              <circle cx="13.5" cy="10.5" r="1.2" fill="#fff" />
            </Icon>
            <Caret />
          </Tool>
          <Tool label="Sketch" className="ml-1">
            <Icon>
              <path d="M2 7C7 5 6 10 5 14 3 20 6 24 12 21" fill="none" stroke="#222" strokeWidth="1.5" />
              <path d="M11 12 20 2 23 5V13L15 20 12 18Z" fill="#e3342a" stroke="#7a1510" strokeWidth=".8" />
              <path d="M11 12 13 14 15 20 7 22Z" fill="#f2d9b3" stroke="#7a1510" strokeWidth=".6" />
              <path d="M13 12.5 21 4" stroke="#ff9a8a" strokeWidth="1.5" />
            </Icon>
          </Tool>

          <div className="ml-auto flex items-center">
            <Tool label="No preview" className="w-7">
              <Icon>
                <ellipse cx="12" cy="18.5" rx="9" ry="5" fill="#333" stroke="#888" />
                <path d="M5 8 9 2 18 1 20 6 15 15 8 15Z" fill="#dedede" stroke="#888" />
                <ellipse cx="14" cy="5" rx="5" ry="3" fill="#fff" stroke="#888" transform="rotate(20 14 5)" />
              </Icon>
            </Tool>
            <Tool label="Wireframe preview" className="w-[30px]">
              <Icon>
                <g transform="rotate(38 12 12)" fill="#f4f4f4" stroke="#555">
                  <path d="M5 6V18A7 4 0 0 0 19 18V6Z" />
                  <ellipse cx="12" cy="6" rx="7" ry="4.5" />
                  <ellipse cx="12" cy="6" rx="4" ry="2.5" />
                  <ellipse cx="12" cy="17" rx="4" ry="3" />
                </g>
              </Icon>
            </Tool>
            <Tool label="Shaded preview" className="w-7 border border-[#1a80d4] bg-[#eef6fd]">
              <Icon>
                <g transform="rotate(42 12 12)" stroke="#5e0505">
                  <path d="M4 6V18A8 4.5 0 0 0 20 18V6Z" fill="#c8171a" />
                  <path d="M6 9V19H10V10Z" fill="#ee5550" stroke="none" />
                  <ellipse cx="12" cy="6" rx="8" ry="5" fill="#d9302c" />
                  <ellipse cx="12" cy="6" rx="4.5" ry="2.5" fill="#6e0808" />
                </g>
              </Icon>
            </Tool>
            <span className="ml-2 h-6 w-px bg-[#c4c4c4]" />
            <Tool label="Selected only" className="ml-2 w-7">
              <Icon>
                <g transform="rotate(42 12 12)" stroke="#235c08">
                  <path d="M4 12V18A8 4.5 0 0 0 20 18V12Z" fill="#dedede" stroke="#777" />
                  <path d="M4 6V12H20V6Z" fill="#4a9c1e" />
                  <ellipse cx="12" cy="6" rx="8" ry="5" fill="#6fbb3b" />
                  <ellipse cx="12" cy="6" rx="4.5" ry="2.5" fill="#d5f0bd" />
                </g>
                <path d="M1 4 19 23" stroke="#222" strokeWidth="1.3" />
              </Icon>
            </Tool>
            <Tool label="Preview colours" className="w-7">
              <Icon>
                <circle cx="12" cy="12" r="10" fill="#f6f6f6" stroke="#444" />
                <path d="M12 2A10 10 0 0 0 12 22Z" fill="#ef8d24" />
                <path d="M17 5A9 9 0 0 1 14 20Z" fill="#d0d0d0" />
              </Icon>
            </Tool>
            <span className="ml-1 h-6 w-px bg-[#c4c4c4]" />
            <Tool label="Mesh quality" className="ml-1 w-[37px] gap-1">
              <Icon>
                <path d="M12 2 19 5 22 12 19 19 12 22 5 19 2 12 5 5Z" fill="#5b9bec" stroke="#1f4f9c" />
                <path d="M12 3 17 6 15 12 7 13 4 8Z" fill="#c4defb" />
              </Icon>
              <Caret />
            </Tool>
          </div>
        </div>

        <main className="relative min-h-0 flex-1 overflow-hidden border-r-2 border-white bg-[#cdc9c1]">
          <Definition />
          <Compass />
          <div className="absolute bottom-0 left-0 flex h-7 w-[147px] items-center border border-black bg-linear-to-b from-[#f2f2f2] to-[#a9a9a9] pl-px">
            <button aria-label="Markov suggestions" className="h-6 w-6 rounded-sm border border-black bg-[#fcc63a]">
              <Icon className="h-full w-full">
                <path d="M3 19 8 13 8 19 13 9 13 18 18 6 17 16 22 13" fill="none" stroke="#9c5a0c" strokeWidth="2" strokeLinejoin="round" />
              </Icon>
            </button>
            <button aria-label="Sockets" className="ml-1 flex h-6 w-[26px] items-center">
              <svg viewBox="0 0 24 24" className="h-6 w-6" aria-hidden="true">
                <path d="M3 17V8L8 17V8" fill="none" stroke="#111" strokeWidth="1.4" />
                <path d="M10 2H16V22H10Z" fill="#6fdc2c" stroke="#222" />
                <path d="M11 10H18V7L24 12 18 17V14H11Z" fill="#d21a12" stroke="#600" strokeWidth=".7" />
              </svg>
            </button>
            <button aria-label="Align" className="h-6 w-6">
              <Icon>
                <rect x="3" y="2" width="6" height="20" fill="#6fdc2c" stroke="#222" />
                <rect x="16" y="2" width="7" height="20" fill="#d81f1a" stroke="#600" />
                <path d="M11 2V11M9.5 8 11 11 12.5 8M14 20V11M12.5 14 14 11 15.5 14" fill="none" stroke="#111" />
              </Icon>
            </button>
            <button aria-label="Add" className="ml-2 flex h-[18px] w-[18px] items-center justify-center rounded-sm border border-[#444] bg-[#f4f4f4]">
              <svg viewBox="0 0 10 10" className="h-2.5 w-2.5"><path d="M5 1V9M1 5H9" stroke="#000" strokeWidth="1.8" /></svg>
            </button>
            <button aria-label="Navigate" className="ml-2 h-6 w-6">
              <Icon>
                <path d="M2 12C8 12 12 11 16 8" fill="none" stroke="#2fae4a" strokeWidth="1.5" />
                <path d="M3 8C8 12 12 12 17 7" fill="none" stroke="#2748c8" strokeWidth="2" />
                <path d="M14 22C10 17 13 13 17 7" fill="none" stroke="#d22424" strokeWidth="2" />
                <path d="M6 18C10 16 13 12 17 7" fill="none" stroke="#000" strokeWidth="2.5" />
                <path d="M12 3 23 1 20 12Z" />
              </Icon>
            </button>
            <span className="ml-auto h-full w-1.5 bg-[#8e8e8e]" />
          </div>
        </main>
      </div>

      <footer className="flex h-6 shrink-0 items-center justify-between border-t-2 border-b-2 border-t-white border-b-black bg-[#f0f0f0] pr-8 pl-[7px]">
        <span>...</span>
        <span className="text-[#6a6a6a]">1.0.0007</span>
      </footer>
    </div>
  );
}
